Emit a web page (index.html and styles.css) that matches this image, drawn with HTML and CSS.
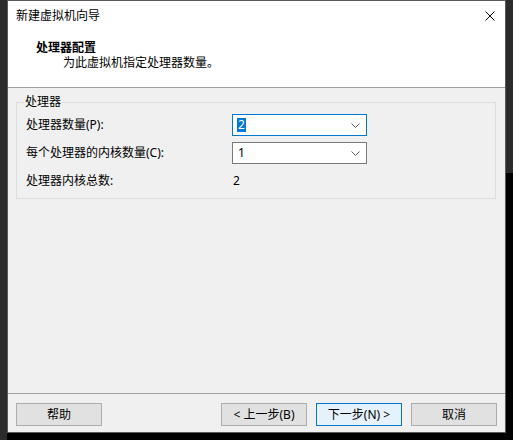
FILE: index.html
```html
<!DOCTYPE html>
<html lang="zh-CN">
<head>
<meta charset="utf-8">
<title>新建虚拟机向导</title>
<link rel="stylesheet" href="styles.css">
</head>
<body>
<div class="window">
  <div class="titlebar">
    <span class="title">新建虚拟机向导</span>
    <svg class="close" width="10" height="10" viewBox="0 0 10 10"><path d="M0.5 0.5 L9.5 9.5 M9.5 0.5 L0.5 9.5" stroke="#000" stroke-width="1" fill="none"/></svg>
  </div>
  <div class="header">
    <div class="h-title">处理器配置</div>
    <div class="h-sub">为此虚拟机指定处理器数量。</div>
  </div>
  <div class="content">
    <fieldset class="group">
      <legend>处理器</legend>
      <div class="rows">
        <div class="label">处理器数量(P):</div>
        <div class="combo focused"><span class="sel">2</span><svg class="chev" width="9" height="5" viewBox="0 0 9 5"><path d="M0.5 0.5 L4.5 4.5 L8.5 0.5" stroke="#606060" fill="none"/></svg></div>
        <div class="label">每个处理器的内核数量(C):</div>
        <div class="combo"><span class="val">1</span><svg class="chev" width="9" height="5" viewBox="0 0 9 5"><path d="M0.5 0.5 L4.5 4.5 L8.5 0.5" stroke="#606060" fill="none"/></svg></div>
        <div class="label">处理器内核总数:</div>
        <div class="total">2</div>
      </div>
    </fieldset>
  </div>
  <div class="footer">
    <button class="btn">帮助</button>
    <div class="spacer"></div>
    <button class="btn">&lt; 上一步(B)</button>
    <button class="btn primary">下一步(N) &gt;</button>
    <button class="btn">取消</button>
  </div>
</div>
</body>
</html>
```
FILE: styles.css
```css
html, body {
  margin: 0;
  padding: 0;
}
body {
  width: 513px;
  height: 440px;
  overflow: hidden;
  background:
    linear-gradient(to right, #2b2b2b 7px, transparent 7px),
    linear-gradient(to bottom, #2b2b2b 173px, #000 173px);
  font-family: "Noto Sans", "Noto Sans CJK SC", sans-serif;
  font-size: 12px;
  color: #000;
}
.window {
  margin-left: 7px;
  width: 497px;
  height: 431px;
  border: 1px solid #5a5a5a;
  background: #f0f0f0;
  display: flex;
  flex-direction: column;
}
.titlebar {
  height: 30px;
  background: #fff;
  display: flex;
  align-items: center;
  justify-content: space-between;
  padding: 0 10px 0 8px;
}
.title {
  line-height: 16px;
}
.header {
  background: #fff;
  border-bottom: 1px solid #a0a0a0;
  padding: 9px 0 0 28px;
  box-sizing: border-box;
  height: 57px;
}
.h-title {
  font-weight: bold;
  line-height: 16px;
}
.h-sub {
  line-height: 16px;
  margin-left: 27px;
  margin-top: -1px;
}
.content {
  flex: 1;
  padding: 6px 9px 0 8px;
  border-bottom: 1px solid #a0a0a0;
}
.group {
  margin: 0;
  border: 1px solid #dcdcdc;
  padding: 4px 9px 6px 9px;
  min-width: 0;
}
.group legend {
  padding: 0 1px;
  margin-left: -2px;
  line-height: 16px;
}
.rows {
  display: grid;
  grid-template-columns: 206px 135px;
  grid-auto-rows: 22px;
  row-gap: 6px;
  align-items: center;
}
.label {
  line-height: 16px;
}
.combo {
  height: 22px;
  box-sizing: border-box;
  border: 1px solid #7a7a7a;
  background: #fff;
  display: flex;
  align-items: center;
  justify-content: space-between;
  padding: 0 6px 0 4px;
}
.combo.focused {
  border-color: #0078d7;
}
.sel {
  background: #0078d7;
  color: #fff;
  line-height: 14px;
  padding: 0 1px;
}
.val {
  line-height: 16px;
  padding-left: 1px;
}
.chev {
  display: block;
}
.total {
  padding-left: 1px;
  line-height: 16px;
}
.footer {
  height: 38px;
  display: flex;
  align-items: flex-start;
  padding: 9px 8px 0 8px;
  box-sizing: border-box;
  gap: 9px;
}
.spacer {
  flex: 1;
}
.btn {
  width: 86px;
  height: 23px;
  box-sizing: border-box;
  border: 1px solid #adadad;
  background: #e1e1e1;
  font-family: "Noto Sans", "Noto Sans CJK SC", sans-serif;
  font-size: 12px;
  color: #000;
  padding: 0;
  margin: 0;
  line-height: 16px;
}
.btn.primary {
  border-color: #0078d7;
  background: #e5f1fb;
}
```
